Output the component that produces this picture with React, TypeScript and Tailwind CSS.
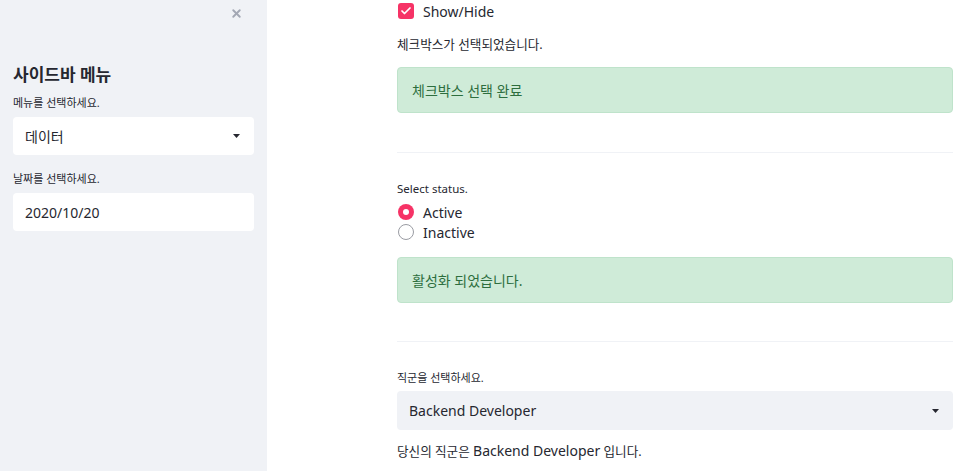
import { Check, X } from 'lucide-react';

const font = { fontFamily: '"Noto Sans", "Noto Sans CJK KR", sans-serif' };

const Caret = () => (
  <svg width="7" height="4" viewBox="0 0 7 4" className="shrink-0">
    <path d="M0 0h7L3.5 4z" fill="#262730" />
  </svg>
);

const Alert = ({ text }: { text: string }) => (
  <div className="h-[46px] rounded-[4px] border border-[#bfe3cb] bg-[#cfebd8] px-[14px] flex items-center text-[14px] text-[#2d6e3e]">
    {text}
  </div>
);

export default function App() {
  return (
    <div className="flex w-[960px] h-[471px] overflow-hidden bg-white text-[#262730]" style={font}>
      {/* sidebar */}
      <aside className="w-[267px] shrink-0 bg-[#f0f2f6] px-[13px] flex flex-col">
        <div className="h-[26px] flex items-center justify-end pr-[11px]">
          <X size={13} strokeWidth={3.5} className="text-[#a3a8b4]" />
        </div>
        <h2 className="mt-[38px] h-[22px] leading-[22px] text-[17px] font-bold">사이드바 메뉴</h2>
        <p className="mt-[9px] h-[16px] leading-[16px] text-[11px]">메뉴를 선택하세요.</p>
        <div className="mt-[6px] h-[38px] rounded-[4px] bg-white pl-[12px] pr-[14px] flex items-center justify-between text-[14px]">
          <span>데이터</span>
          <Caret />
        </div>
        <p className="mt-[16px] h-[16px] leading-[16px] text-[11px]">날짜를 선택하세요.</p>
        <div className="mt-[6px] h-[38px] rounded-[4px] bg-white px-[12px] flex items-center text-[14px]">
          2020/10/20
        </div>
      </aside>

      {/* main */}
      <main className="flex-1 pl-[130px] pr-[7px] flex flex-col text-[14px]">
        <label className="mt-[3px] h-[16px] flex items-center gap-[9px]">
          <span className="w-[16px] h-[16px] ml-[1px] rounded-[3px] bg-[#f63366] flex items-center justify-center">
            <Check size={12} strokeWidth={3.5} className="text-white" />
          </span>
          <span>Show/Hide</span>
        </label>
        <p className="mt-[16px] h-[20px] leading-[20px] text-[12.6px]">체크박스가 선택되었습니다.</p>
        <div className="mt-[12px]">
          <Alert text="체크박스 선택 완료" />
        </div>
        <hr className="mt-[39px] border-0 border-t border-[#f0f2f6]" />

        <p className="mt-[28px] h-[16px] leading-[16px] text-[11.5px]">Select status.</p>
        <div className="mt-[5px] flex flex-col">
          <label className="h-[20px] flex items-center gap-[9px]">
            <span className="ml-[1px] w-[16px] h-[16px] rounded-full bg-[#f63366] flex items-center justify-center">
              <span className="w-[6px] h-[6px] rounded-full bg-white" />
            </span>
            <span>Active</span>
          </label>
          <label className="h-[20px] flex items-center gap-[9px]">
            <span className="ml-[1px] w-[16px] h-[16px] rounded-full border-[1.5px] border-[#9a9ca3] bg-white" />
            <span>Inactive</span>
          </label>
        </div>
        <div className="mt-[15px]">
          <Alert text="활성화 되었습니다." />
        </div>
        <hr className="mt-[38px] border-0 border-t border-[#f0f2f6]" />

        <p className="mt-[28px] h-[16px] leading-[16px] text-[11px]">직군을 선택하세요.</p>
        <div className="mt-[5px] h-[39px] rounded-[4px] bg-[#f0f2f6] pl-[12px] pr-[14px] flex items-center justify-between">
          <span>Backend Developer</span>
          <Caret />
        </div>
        <p className="mt-[11px] h-[20px] leading-[20px]">
          <span className="text-[12.6px]">당신의 직군은 </span>Backend Developer<span className="text-[12.6px]"> 입니다.</span>
        </p>
      </main>
    </div>
  );
}
